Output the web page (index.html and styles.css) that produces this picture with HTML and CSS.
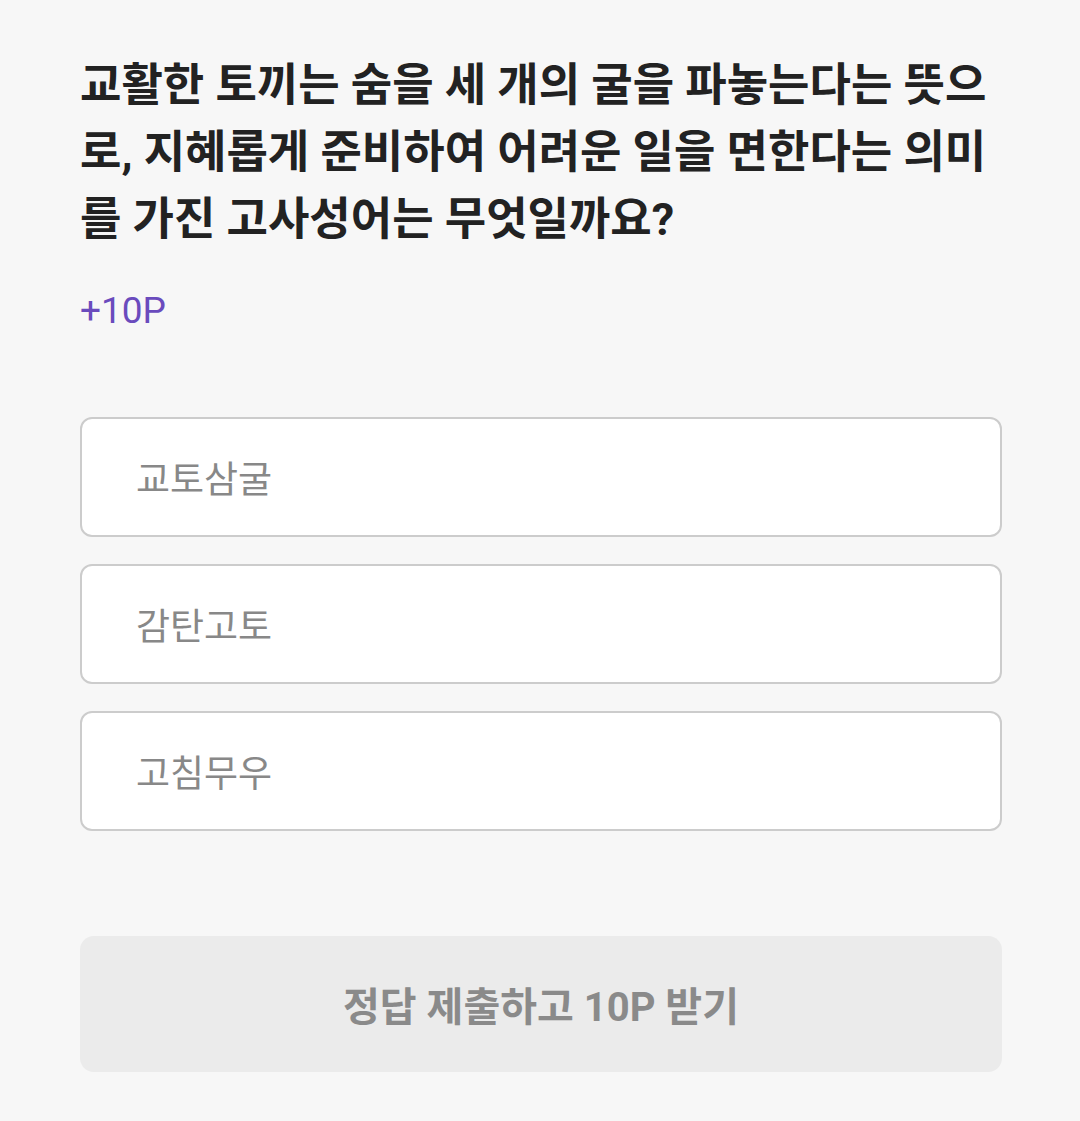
FILE: index.html
```html
<!DOCTYPE html>
<html lang="ko">
<head>
    <meta charset="UTF-8">
    <meta name="viewport" content="width=device-width, initial-scale=1.0">
    <title>퀴즈</title>
    <link rel="stylesheet" href="styles.css">
</head>
<body>

    <div class="quiz">
        <h2 class="question">교활한 토끼는 숨을 세 개의 굴을 파놓는다는 뜻으로, 지혜롭게 준비하여 어려운 일을 면한다는 의미를 가진 고사성어는 무엇일까요?</h2>
        <p class="point">+10P</p>

        <div class="options">
            <button type="button" class="option">교토삼굴</button>
            <button type="button" class="option">감탄고토</button>
            <button type="button" class="option">고침무우</button>
        </div>

        <button type="button" class="submit" disabled>정답 제출하고 10P 받기</button>
    </div>

</body>
</html>
```

FILE: styles.css
```css
body {
    margin: 0;
    background-color: #f7f7f7;
    font-family: Roboto, "Noto Sans CJK KR", sans-serif;
}
.quiz {
    padding: 52px 78px 50px 80px;
}
.question {
    margin: 0;
    font-size: 45px;
    line-height: 67px;
    font-weight: 700;
    color: #222222;
    word-break: break-all;
}
.point {
    margin: 33px 0 0;
    font-size: 37px;
    line-height: 50px;
    color: #6a4bbd;
}
.options {
    display: flex;
    flex-direction: column;
    gap: 27px;
    margin-top: 81px;
}
.option {
    height: 120px;
    padding: 0 0 0 54px;
    text-align: left;
    background: #ffffff;
    border: 2px solid #cccccc;
    border-radius: 12px;
    font-family: inherit;
    font-size: 37px;
    color: #888888;
}
.submit {
    display: block;
    width: 100%;
    height: 136px;
    margin-top: 105px;
    border: none;
    border-radius: 14px;
    background-color: #ebebeb;
    font-family: inherit;
    font-size: 40px;
    font-weight: 700;
    color: #8a8a8a;
}
```
